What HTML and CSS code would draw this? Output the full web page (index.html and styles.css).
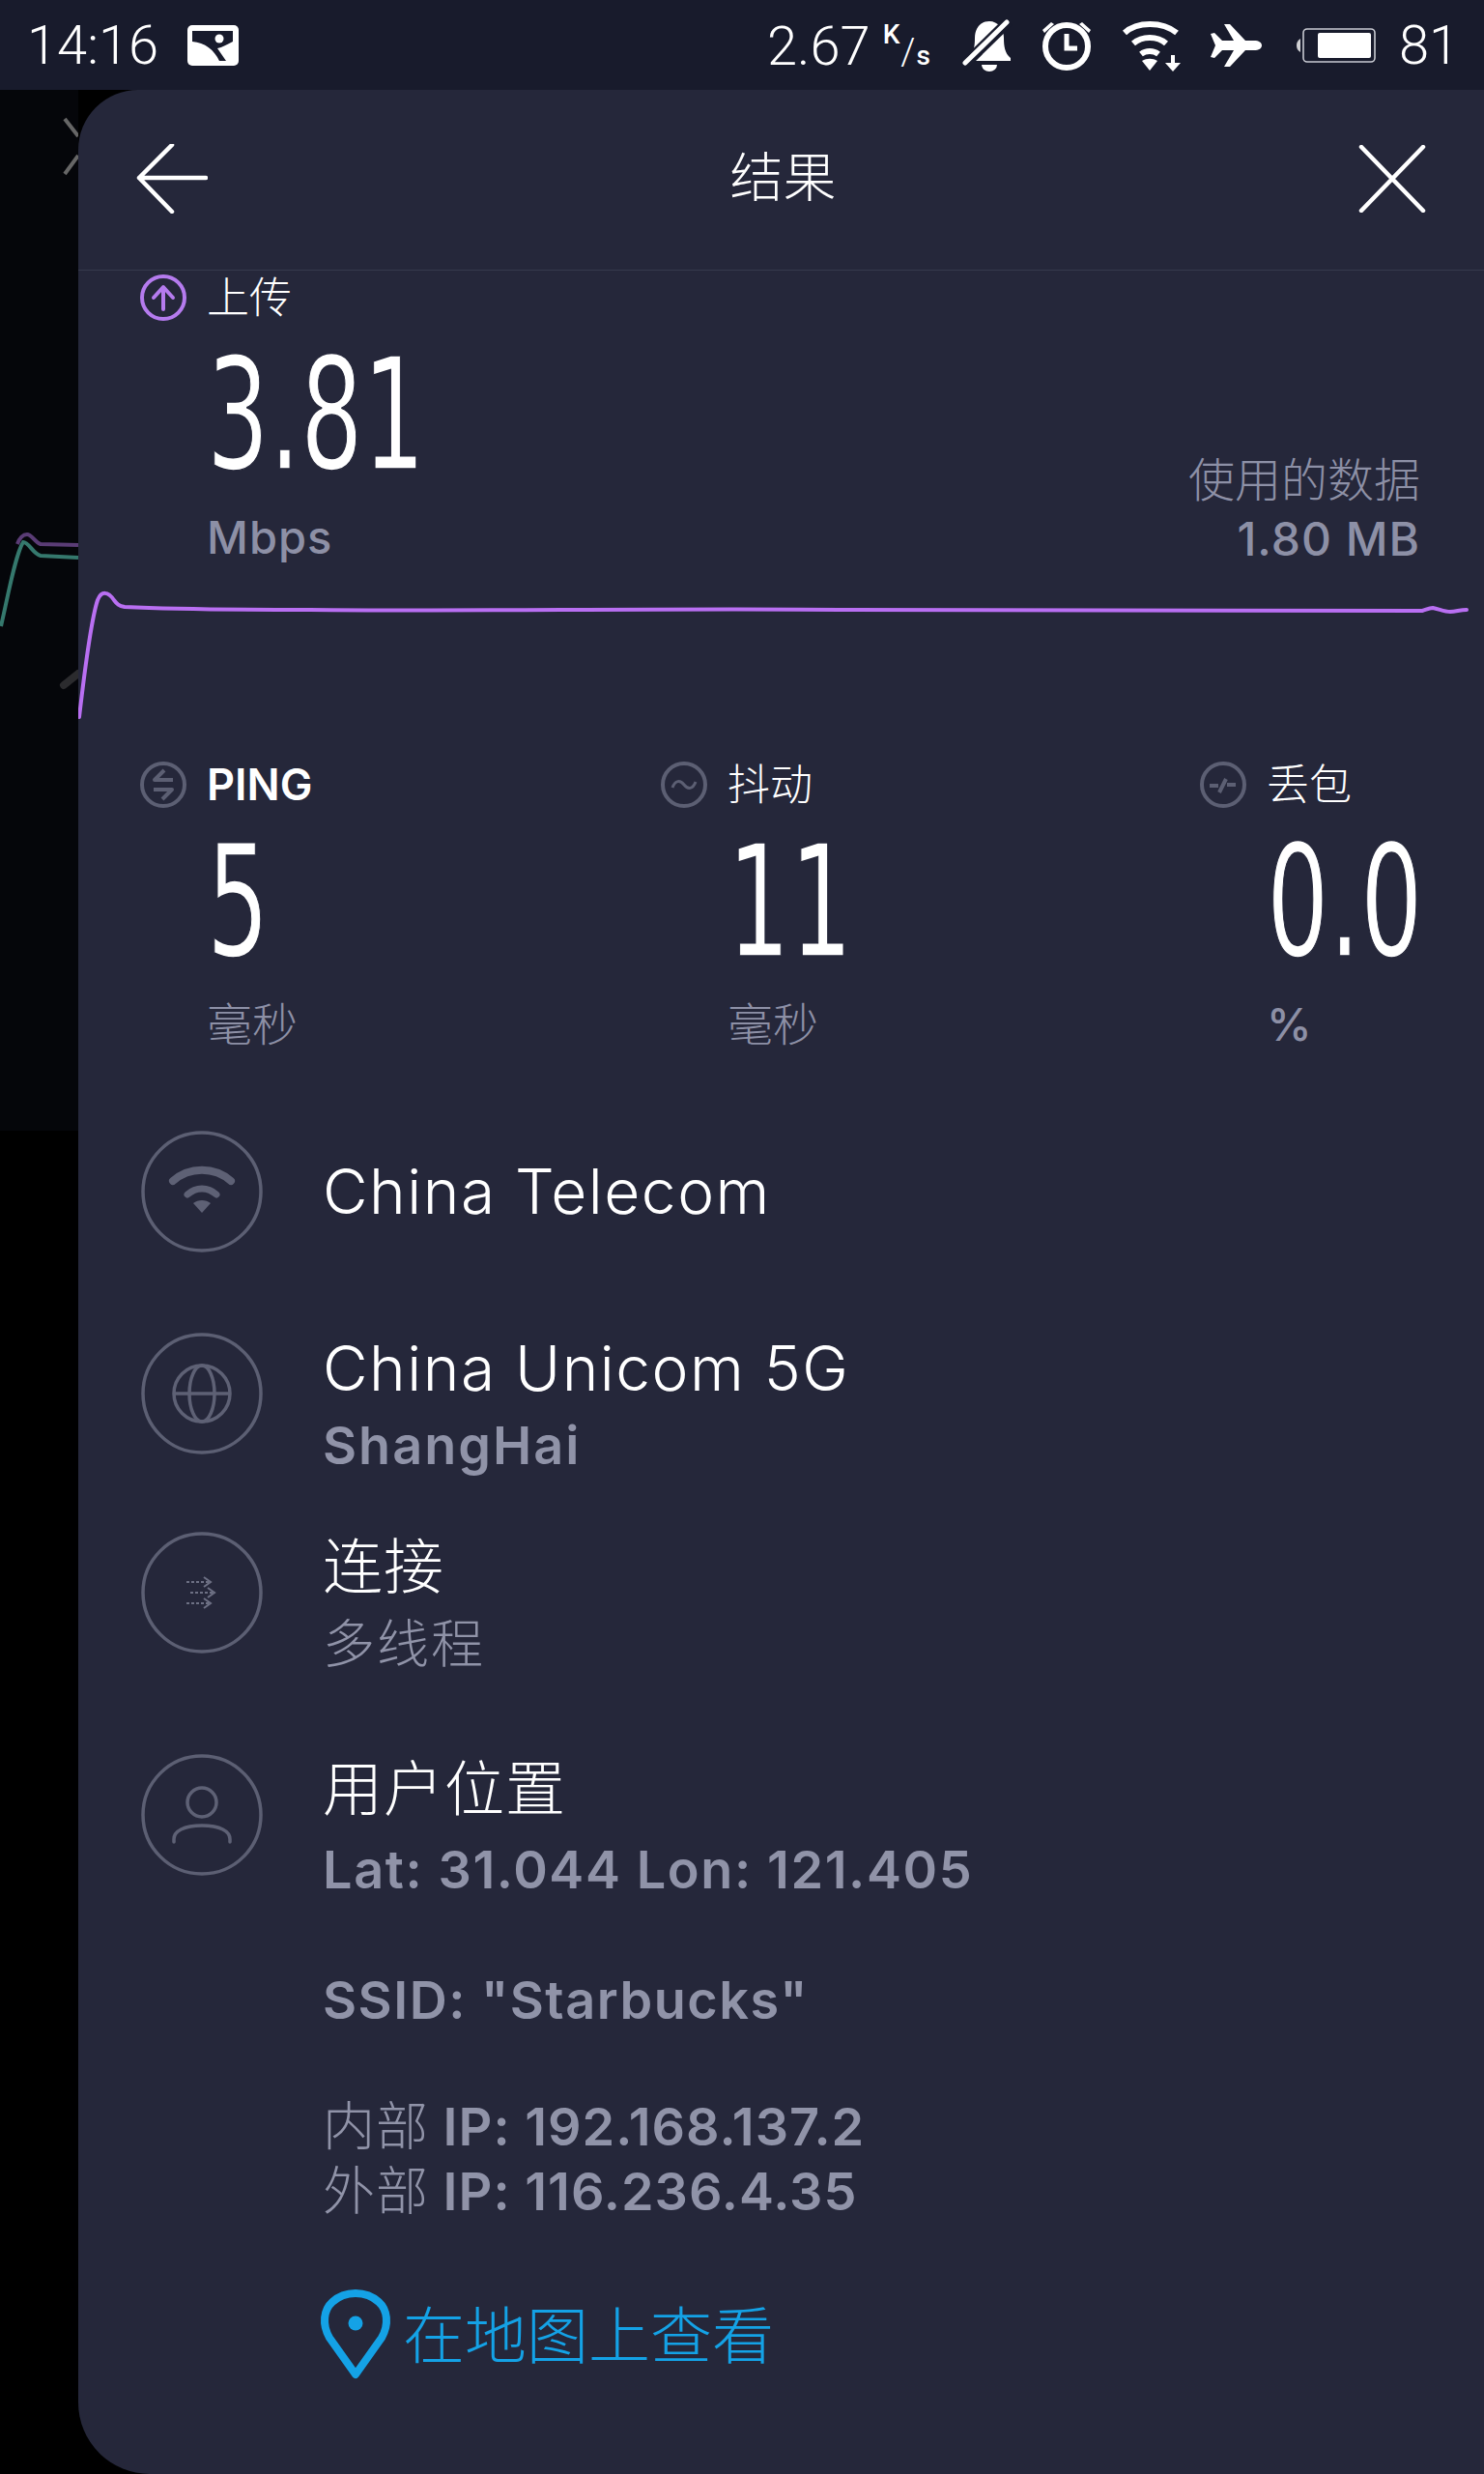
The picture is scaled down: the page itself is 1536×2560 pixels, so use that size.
FILE: index.html
```html
<!DOCTYPE html>
<html lang="zh">
<head>
  <meta charset="UTF-8" />
  <meta name="viewport" content="width=device-width, initial-scale=1.0" />
  <title>结果</title>
  <link rel="stylesheet" href="styles.css">
</head>
<body>
  <div class="status-bar">
    <div class="status-left">
      <span class="clock">14:16</span>
      <svg class="st-gallery" width="53" height="42" viewBox="0 0 53 42">
        <rect width="53" height="42" rx="5" fill="#fff"/>
        <path d="M5 6H47V17C41 20 36 23 31 24L40 37H33C28 26 18 18 5 17Z" fill="#181b2c"/>
        <circle cx="33" cy="14" r="4.5" fill="#fff"/>
      </svg>
    </div>
    <div class="status-right">
      <span class="speed">2.67<span class="speed-unit"><span class="unit-k">K</span><span class="unit-slash">/</span>s</span></span>
      <svg class="st-bell" width="56" height="56" viewBox="0 0 56 56">
        <path d="M30 3C20 3 15 11 15 20C15 29 14 35 9 41V44H52V41C46 36 45 29 45 20C45 11 39 3 30 3Z" fill="#fff"/>
        <path d="M22 48a8 7 0 0 0 16 0Z" fill="#fff"/>
        <path d="M2 50L50 3" stroke="#181b2c" stroke-width="11"/>
        <path d="M5 46L48 4" stroke="#fff" stroke-width="5" stroke-linecap="round"/>
      </svg>
      <svg class="st-alarm" width="56" height="56" viewBox="0 0 56 56">
        <circle cx="28" cy="29" r="22" fill="none" stroke="#fff" stroke-width="6"/>
        <path d="M28 16V31H39" fill="none" stroke="#fff" stroke-width="5"/>
        <path d="M3 12L12 4L15 6L5 15Z M53 12L44 4L41 6L51 15Z" fill="#fff"/>
      </svg>
      <svg class="st-wifi" width="62" height="54" viewBox="0 0 62 54">
        <g fill="none" stroke="#fff" stroke-width="6">
          <path d="M3 14C16 2 42 2 57 14"/>
          <path d="M12 25C21 17 37 17 46 25"/>
          <path d="M20 36C25 32 33 32 38 36"/>
        </g>
        <path d="M29 53L21 43C26 40 32 40 37 43Z" fill="#fff"/>
        <path d="M53 37V49" stroke="#fff" stroke-width="4"/>
        <path d="M45 45H61L53 54Z" fill="#fff"/>
      </svg>
      <svg class="st-plane" width="54" height="46" viewBox="0 0 54 46">
        <path d="M1 11L5 10L13 18H25L15 1H21L37 18H46C51 18 54 20 54 23C54 26 51 28 46 28H37L21 45H15L25 28H13L5 36L1 35L6 23Z" fill="#fff"/>
      </svg>
      <svg class="st-battery" width="84" height="36" viewBox="0 0 84 36">
        <path d="M5 11C2 13 1 15 1 18C1 21 2 23 5 25Z" fill="#fff" opacity="0.8"/>
        <rect x="8" y="1" width="74" height="34" rx="4" fill="none" stroke="#c8cad2" stroke-width="1.6"/>
        <rect x="23" y="5" width="55" height="26" rx="2" fill="#fff"/>
      </svg>
      <span class="battery-level">81</span>
    </div>
  </div>

  <div class="screen">
    <svg class="backdrop" width="81" height="2467" viewBox="0 0 81 2467">
      <rect width="81" height="1077" fill="#05060a"/>
      <path d="M67 30L81 48M67 87L81 68" stroke="#666" stroke-width="4" fill="none"/>
      <path d="M18 470C20 464 24 460 28 460C33 460 36 468 42 470L81 471" stroke="#5a3c75" stroke-width="4" fill="none"/>
      <path d="M1 555C8 525 16 480 24 468C30 468 34 480 42 482L81 484" stroke="#35786d" stroke-width="4" fill="none"/>
      <path d="M66 616L81 604" stroke="#2b2b2e" stroke-width="8" stroke-linecap="round" fill="none"/>
    </svg>

    <div class="panel">
      <div class="panel-head">
        <svg class="head-icon" width="74" height="72" viewBox="0 0 74 72">
          <path d="M72 35H3M37 1L3 35L37 70" fill="none" stroke="#fff" stroke-width="4.5" stroke-linecap="round" stroke-linejoin="round"/>
        </svg>
        <div class="panel-title">结果</div>
        <svg class="head-icon" width="70" height="70" viewBox="0 0 70 70">
          <path d="M3 2L67 68M67 2L3 68" fill="none" stroke="#fff" stroke-width="4.5" stroke-linecap="round"/>
        </svg>
      </div>

      <div class="upload">
        <div class="upload-main">
          <div class="stat-head">
            <svg class="stat-icon" width="48" height="48" viewBox="0 0 48 48">
              <circle cx="24" cy="24" r="22" fill="none" stroke="#b57bee" stroke-width="4"/>
              <path d="M24 36V14M14 24L24 13L34 24" fill="none" stroke="#b57bee" stroke-width="4" stroke-linecap="round" stroke-linejoin="round"/>
            </svg>
            <span class="stat-label">上传</span>
          </div>
          <div class="big-num">3.81</div>
          <div class="unit unit-mbps">Mbps</div>
        </div>
        <div class="data-used">
          <div class="data-label">使用的数据</div>
          <div class="data-value">1.80 MB</div>
        </div>
      </div>

      <svg class="chart" width="1455" height="150" viewBox="0 0 1455 150">
        <path d="M1 143C6 100 14 40 20 22C24 12 31 13 37 22C40 26 42 28 48 29C90 31 150 32 240 32C400 34 600 30 800 32C1000 34 1200 32 1391 33C1395 32 1398 30 1402 30C1408 31 1414 34 1420 34C1426 34 1430 32 1437 32" fill="none" stroke="#b96ff2" stroke-width="4" stroke-linecap="round"/>
      </svg>

      <div class="stats">
        <div class="stat">
          <div class="stat-head">
            <svg class="stat-icon" width="48" height="48" viewBox="0 0 48 48">
              <circle cx="24" cy="24" r="22" fill="none" stroke="#5c5f73" stroke-width="4"/>
              <path d="M34 19H15L25 9M14 29H33L23 39" fill="none" stroke="#5c5f73" stroke-width="4" stroke-linejoin="round"/>
            </svg>
            <span class="stat-label stat-label-latin">PING</span>
          </div>
          <div class="big-num">5</div>
          <div class="unit">毫秒</div>
        </div>
        <div class="stat">
          <div class="stat-head">
            <svg class="stat-icon" width="48" height="48" viewBox="0 0 48 48">
              <circle cx="24" cy="24" r="22" fill="none" stroke="#5c5f73" stroke-width="4"/>
              <path d="M12 27C15 19 20 19 24 24C28 29 33 29 36 21" fill="none" stroke="#5c5f73" stroke-width="3"/>
            </svg>
            <span class="stat-label">抖动</span>
          </div>
          <div class="big-num">11</div>
          <div class="unit">毫秒</div>
        </div>
        <div class="stat">
          <div class="stat-head">
            <svg class="stat-icon" width="48" height="48" viewBox="0 0 48 48">
              <circle cx="24" cy="24" r="22" fill="none" stroke="#5c5f73" stroke-width="4"/>
              <path d="M10 25H19M28 24H37M20 32L27 18" fill="none" stroke="#5c5f73" stroke-width="4"/>
            </svg>
            <span class="stat-label">丢包</span>
          </div>
          <div class="big-num">0.0</div>
          <div class="unit unit-latin">%</div>
        </div>
      </div>

      <div class="info-row info-row-isp">
        <svg class="info-icon" width="126" height="126" viewBox="0 0 126 126">
          <circle cx="63" cy="63" r="61" fill="none" stroke="#5c5f73" stroke-width="3.5"/>
          <path d="M33 52C50 37 76 37 93 52" fill="none" stroke="#5e6175" stroke-width="8" stroke-linecap="round"/>
          <path d="M48 66C57 58 69 58 78 66" fill="none" stroke="#5e6175" stroke-width="7" stroke-linecap="round"/>
          <path d="M63 85L54 75C59 71 67 71 72 75Z" fill="#5e6175"/>
        </svg>
        <div class="info-text"><div class="info-title">China Telecom</div></div>
      </div>

      <div class="info-row info-row-server">
        <svg class="info-icon" width="126" height="126" viewBox="0 0 126 126">
          <circle cx="63" cy="63" r="61" fill="none" stroke="#5c5f73" stroke-width="3.5"/>
          <circle cx="63" cy="63" r="29" fill="none" stroke="#5e6175" stroke-width="3.5"/>
          <ellipse cx="63" cy="63" rx="13" ry="29" fill="none" stroke="#5e6175" stroke-width="3.5"/>
          <path d="M34 63H92" stroke="#5e6175" stroke-width="3.5"/>
        </svg>
        <div class="info-text">
          <div class="info-title">China Unicom 5G</div>
          <div class="info-sub">ShangHai</div>
        </div>
      </div>

      <div class="info-row info-row-conn">
        <svg class="info-icon" width="126" height="126" viewBox="0 0 126 126">
          <circle cx="63" cy="63" r="61" fill="none" stroke="#5c5f73" stroke-width="3.5"/>
          <g fill="none" stroke="#6d7084" stroke-width="2">
            <path d="M47 52H70" stroke-dasharray="3 2"/>
            <path d="M65 47L72 52L65 57"/>
            <path d="M51 63H74" stroke-dasharray="3 2"/>
            <path d="M69 58L76 63L69 68"/>
            <path d="M47 74H70" stroke-dasharray="3 2"/>
            <path d="M65 69L72 74L65 79"/>
          </g>
        </svg>
        <div class="info-text">
          <div class="info-title info-title-cjk">连接</div>
          <div class="info-sub info-sub-cjk">多线程</div>
        </div>
      </div>

      <div class="info-row">
        <svg class="info-icon" width="126" height="126" viewBox="0 0 126 126">
          <circle cx="63" cy="63" r="61" fill="none" stroke="#5c5f73" stroke-width="3.5"/>
          <circle cx="63" cy="50" r="15" fill="none" stroke="#5e6175" stroke-width="3.5"/>
          <path d="M34 91V88C34 80 44 74 63 74C82 74 92 80 92 88V91" fill="none" stroke="#5e6175" stroke-width="3.5" stroke-linecap="round"/>
        </svg>
        <div class="info-text">
          <div class="info-title info-title-cjk">用户位置</div>
          <div class="info-sub info-lat">Lat: 31.044 Lon: 121.405</div>
          <div class="info-sub info-gap">SSID: "Starbucks"</div>
          <div class="info-sub ip-line info-gap-ip"><span class="cjk-thin">内部</span> IP: 192.168.137.2</div>
          <div class="info-sub ip-line"><span class="cjk-thin">外部</span> IP: 116.236.4.35</div>
          <div class="map-link">
            <svg class="pin" width="76" height="96" viewBox="0 0 76 96">
              <path d="M38 88L11 50C3 36 5 21 14 13C27 1 49 1 62 13C71 21 73 36 65 50Z" fill="none" stroke="#14a2e6" stroke-width="8" stroke-linejoin="round"/>
              <circle cx="38" cy="35" r="7.5" fill="#14a2e6"/>
            </svg>
            <span>在地图上查看</span>
          </div>
        </div>
      </div>
    </div>
  </div>
</body>
</html>
```

FILE: styles.css
```css
html, body {
  margin: 0;
  padding: 0;
  background: #000;
  height: 2560px;
  overflow: hidden;
}
body {
  font-family: 'Inter', 'Noto Sans CJK SC', sans-serif;
  color: #fff;
}

/* status bar */
.status-bar {
  height: 93px;
  background: #181b2c;
  display: flex;
  justify-content: space-between;
  align-items: center;
  padding: 0 26px 0 28px;
  box-sizing: border-box;
}
.status-left, .status-right {
  display: flex;
  align-items: center;
}
.clock, .speed, .battery-level {
  font-family: 'Roboto', sans-serif;
  font-size: 56px;
  font-weight: 300;
  line-height: 88px;
}
.st-gallery {
  margin-left: 30px;
}
.speed {
  margin-right: 30px;
  white-space: nowrap;
}
.speed-unit {
  font-size: 28px;
  font-weight: 500;
  margin-left: 13px;
  letter-spacing: 1px;
}
.unit-k {
  vertical-align: 22px;
}
.unit-slash {
  font-size: 38px;
  font-weight: 300;
}
.st-alarm {
  margin-left: 26px;
}
.st-wifi {
  margin-left: 29px;
}
.st-plane {
  margin-left: 29px;
}
.st-battery {
  margin-left: 35px;
}
.battery-level {
  margin-left: 23px;
}

/* page under the status bar */
.screen {
  display: flex;
  height: 2467px;
}
.backdrop {
  flex: none;
}
.panel {
  flex: 1;
  min-width: 0;
  background: #25273a;
  border-radius: 62px 0 0 74px;
  overflow: hidden;
}
.panel-head {
  height: 187px;
  box-sizing: border-box;
  border-bottom: 1px solid #36394d;
  display: flex;
  justify-content: space-between;
  align-items: center;
  padding: 0 60px 3px 60px;
}
.head-icon {
  flex: none;
}
.panel-title {
  font-size: 55px;
  font-weight: 300;
  line-height: 70px;
  padding-bottom: 3px;
}

/* upload block */
.upload {
  display: flex;
  justify-content: space-between;
  align-items: flex-end;
  padding: 4px 66px 0 64px;
  height: 319px;
  box-sizing: border-box;
}
.stat-head {
  display: flex;
  align-items: center;
  height: 48px;
}
.stat-icon {
  flex: none;
  margin-right: 21px;
}
.stat-label {
  font-size: 44px;
  line-height: 48px;
  font-weight: 300;
}
.stat-label-latin {
  font-size: 45px;
  font-weight: 600;
}
.big-num {
  font-family: 'DejaVu Sans', sans-serif;
  font-size: 160px;
  line-height: 150px;
  margin: 23px 0 0 69px;
  transform: scaleX(0.635);
  transform-origin: left center;
  white-space: nowrap;
  -webkit-text-stroke: 1.5px #25273a;
}
.unit {
  color: #8d90a6;
  font-size: 47px;
  line-height: 60px;
  margin: 21px 0 0 69px;
  font-weight: 300;
}
.unit-mbps, .unit-latin {
  font-weight: 500;
  letter-spacing: 1px;
}
.upload-main {
  align-self: flex-start;
  min-width: 0;
}
.data-used {
  text-align: right;
  color: #8d90a6;
  padding-bottom: 10px;
}
.data-label {
  font-size: 48px;
  line-height: 60px;
  font-weight: 300;
}
.data-value {
  font-size: 48px;
  line-height: 62px;
  font-weight: 500;
  letter-spacing: 1px;
}

.chart {
  display: block;
  margin-bottom: 39px;
}

/* ping, jitter, loss */
.stats {
  display: grid;
  grid-template-columns: 539px 558px 1fr;
  padding-left: 64px;
  height: 379px;
}
.stat {
  min-width: 0;
}

/* info rows */
.info-row {
  display: flex;
  padding-left: 65px;
}
.info-row-isp {
  height: 209px;
}
.info-row-isp .info-text {
  padding-top: 26px;
}
.info-row-server {
  height: 206px;
}
.info-row-conn {
  height: 230px;
}
.info-icon {
  flex: none;
  margin: 3px 62px 0 0;
}
.info-title {
  font-size: 64px;
  line-height: 80px;
  font-weight: 300;
  letter-spacing: 1.5px;
}
.info-title-cjk {
  font-size: 62px;
  letter-spacing: 1px;
}
.info-sub {
  color: #9093a8;
  font-size: 54px;
  line-height: 80px;
  font-weight: 600;
  letter-spacing: 2px;
}
.info-sub-cjk, .cjk-thin {
  font-weight: 300;
  font-size: 54px;
}
.info-lat {
  margin-top: 3px;
  letter-spacing: 1.6px;
}
.info-gap {
  margin-top: 55px;
  letter-spacing: 1.5px;
}
.info-gap-ip {
  margin-top: 57px;
}
.ip-line {
  line-height: 67px;
  letter-spacing: 1px;
}

.map-link {
  display: flex;
  align-items: center;
  color: #14a2e6;
  font-size: 64px;
  line-height: 96px;
  font-weight: 300;
  margin: 68px 0 0 -4px;
}
.pin {
  flex: none;
  margin-right: 11px;
}
```
